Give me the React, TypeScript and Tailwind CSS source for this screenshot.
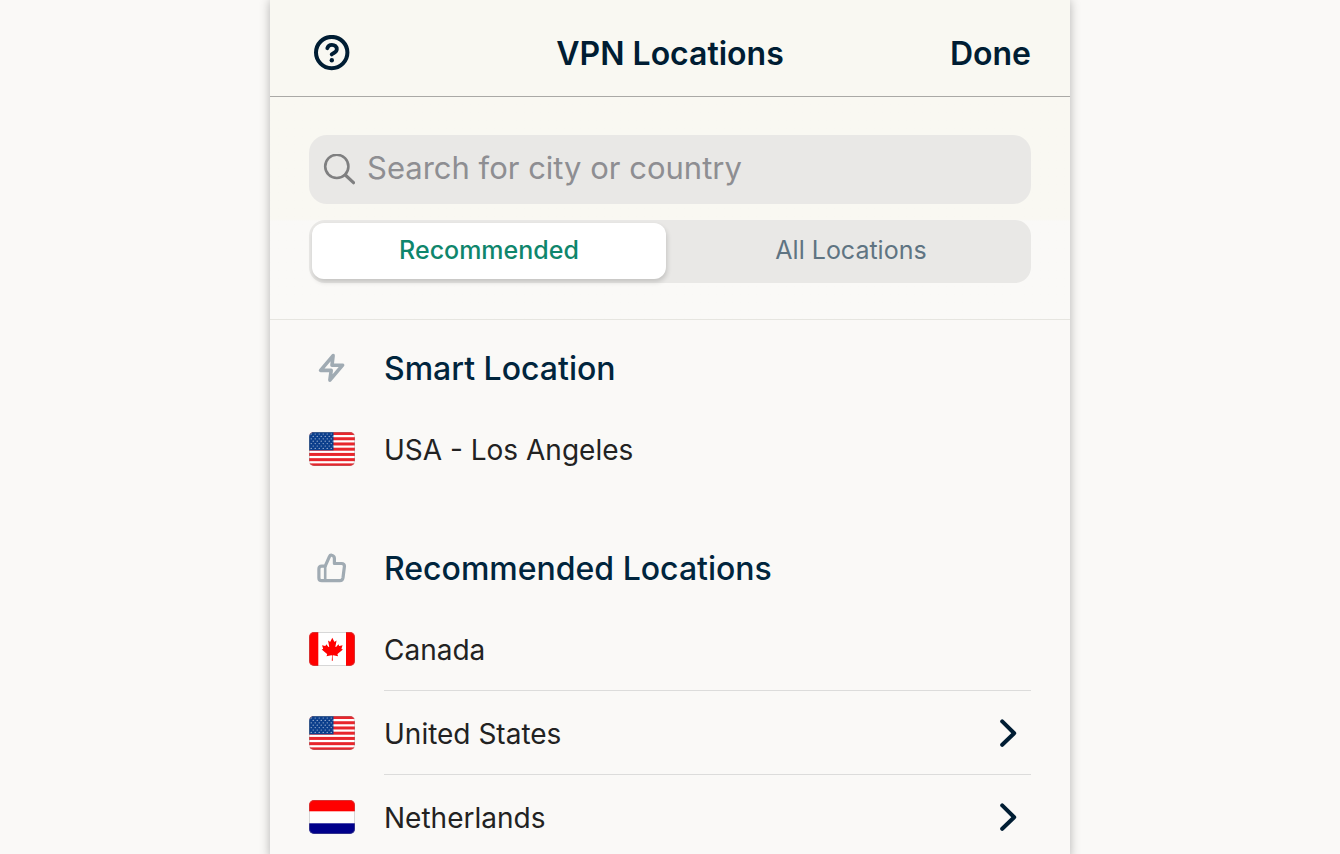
import React, { useState } from "react";

type Country = "us" | "ca" | "nl";

const STRIPES = [0, 2, 4, 6, 8, 10, 12];
const STAR_ROWS = [0, 1, 2, 3, 4, 5, 6];
const STAR_COLS = [0, 1, 2, 3, 4, 5];

function FlagArt({ country }: { country: Country }) {
  if (country === "us") {
    return (
      <>
        <rect width="46" height="34" fill="#fff" />
        {STRIPES.map((n) => (
          <rect key={n} y={(n * 34) / 13} width="46" height={34 / 13 + 0.4} fill="#e8262c" />
        ))}
        <rect width="24.5" height="18.3" fill="#0c3f8c" />
        {STAR_ROWS.map((row) =>
          STAR_COLS.map((col) => (
            <circle
              key={`${row}-${col}`}
              cx={2.2 + col * 4 + (row % 2) * 2}
              cy={2 + row * 2.4}
              r="0.6"
              fill="#b9c7e0"
            />
          ))
        )}
      </>
    );
  }

  if (country === "ca") {
    return (
      <>
        <rect width="46" height="34" fill="#fff" />
        <rect width="9.3" height="34" fill="#f00" />
        <rect x="37" width="9" height="34" fill="#f00" />
        <path
          transform="translate(23.3 17.2) scale(0.0057)"
          fill="#f00"
          d="m-90 2030 45-863a95 95 0 0 0-111-98l-859 151 116-320a65 65 0 0 0-20-73l-941-762 212-99a65 65 0 0 0 34-79l-186-572 542 115a65 65 0 0 0 73-38l105-247 423 454a65 65 0 0 0 111-57l-204-1052 327 189a65 65 0 0 0 91-27l332-652 332 652a65 65 0 0 0 91 27l327-189-204 1052a65 65 0 0 0 111 57l423-454 105 247a65 65 0 0 0 73 38l542-115-186 572a65 65 0 0 0 34 79l212 99-941 762a65 65 0 0 0-20 73l116 320-859-151a95 95 0 0 0-111 98l45 863z"
        />
      </>
    );
  }

  return (
    <>
      <rect width="46" height="34" fill="#fff" />
      <rect width="46" height="11.3" fill="#f00" />
      <rect y="23.3" width="46" height="10.7" fill="#00008b" />
    </>
  );
}

function Flag({ country }: { country: Country }) {
  return (
    <span className="block h-[34px] w-[46px] shrink-0 overflow-hidden rounded-[5px]">
      <svg viewBox="0 0 46 34" className="h-full w-full" aria-hidden="true">
        <FlagArt country={country} />
        <rect x="0.5" y="0.5" width="45" height="33" rx="4.5" fill="none" stroke="#8c8c8c" strokeOpacity="0.35" />
      </svg>
    </span>
  );
}

function HelpIcon() {
  return (
    <svg viewBox="0 0 36 36" className="h-9 w-9" fill="none" stroke="currentColor" aria-hidden="true">
      <circle cx="17.7" cy="17.6" r="15.7" strokeWidth="4" />
      <path d="M13.3 13.2c.6-2.3 2.4-3.4 4.6-3.4 2.8 0 4.9 1.8 4.9 4.4 0 3.3-3.3 3.4-5.1 5.2" strokeWidth="3.8" strokeLinecap="round" />
      <circle cx="17.8" cy="25.2" r="2.2" fill="currentColor" stroke="none" />
    </svg>
  );
}

function SearchIcon() {
  return (
    <svg viewBox="0 0 32 32" className="h-8 w-8 shrink-0 text-[#7f7f80]" fill="none" stroke="currentColor" aria-hidden="true">
      <circle cx="13.8" cy="12.4" r="11.6" strokeWidth="2.6" />
      <path d="M22.3 21l8.2 7.7" strokeWidth="3.2" strokeLinecap="round" />
    </svg>
  );
}

function BoltIcon() {
  return (
    <svg viewBox="0 0 30 30" className="h-[30px] w-[30px]" fill="none" stroke="currentColor" strokeWidth="3.6" strokeLinecap="round" strokeLinejoin="round" aria-hidden="true">
      <path d="M16.1 2.6L3.6 17.4h10.6L12.9 27.1 25.6 12.2H15z" />
    </svg>
  );
}

function ThumbIcon() {
  return (
    <svg viewBox="0 0 30 30" className="h-[30px] w-[30px]" fill="none" stroke="currentColor" strokeWidth="3.2" strokeLinejoin="round" strokeLinecap="round" aria-hidden="true">
      <path d="M8.2 13.2l4.2-9.6c.5-1.2 1.4-1.7 2.4-1.4 1.7.4 2.6 1.6 2.6 3.3v5h7.2c1.9 0 3 1.2 2.8 3L26 24.8c-.3 2-1.3 2.9-3.2 2.9H4.8c-1.9 0-2.9-1-2.9-2.8v-8.8c0-1.9 1-2.9 2.9-2.9z" />
      <path d="M8.2 13.2v14.4" strokeWidth="2.6" />
    </svg>
  );
}

function ChevronIcon() {
  return (
    <svg viewBox="0 0 18 30" className="mr-3.5 h-[30px] w-[18px] text-[#001d33]" fill="none" stroke="currentColor" strokeWidth="4" strokeLinecap="round" strokeLinejoin="round" aria-hidden="true">
      <path d="M3.2 3.4l12 11.8-12 11.6" />
    </svg>
  );
}

function SectionTitle({ icon, title }: { icon: React.ReactNode; title: string }) {
  return (
    <div className="flex h-[78px] items-center gap-[29px]">
      <span className="flex w-[46px] shrink-0 justify-center text-[#a0abb3]">{icon}</span>
      <h2 className="pt-0.5 text-[32px] leading-10 font-medium text-[#00253d]">{title}</h2>
    </div>
  );
}

interface LocationRowProps {
  country: Country;
  name: string;
  divider?: boolean;
  expandable?: boolean;
}

function LocationRow({ country, name, divider, expandable }: LocationRowProps) {
  return (
    <li>
      <button type="button" className="flex h-[84px] w-full items-center gap-[29px] text-left">
        <Flag country={country} />
        <span
          className={`flex h-full flex-1 items-center justify-between border-b ${
            divider ? "border-[#dcdcdb]" : "border-transparent"
          }`}
        >
          <span className="pt-0.5 text-[28px] leading-9 text-[#222]">{name}</span>
          {expandable && <ChevronIcon />}
        </span>
      </button>
    </li>
  );
}

export default function App() {
  const [tab, setTab] = useState<"recommended" | "all">("recommended");
  const [query, setQuery] = useState("");

  const tabClass = (active: boolean) =>
    active
      ? "flex-1 rounded-xl bg-white font-medium text-[#0f866c] shadow-[1px_3px_5px_rgba(0,0,0,0.16)]"
      : "flex-1 rounded-xl text-[#5f7482]";

  return (
    <div className="min-h-screen bg-[#faf9f7] font-['Inter',sans-serif]">
      <main className="mx-auto min-h-screen w-full max-w-[800px] bg-[#faf9f7] shadow-[0_0_10px_rgba(0,0,0,0.28)]">
        <header className="grid h-[97px] grid-cols-[1fr_auto_1fr] items-center border-b border-[#aaa9a6] bg-[#f9f8f2] px-[39px] pt-3 text-[#001d33]">
          <button type="button" aria-label="Help" className="ml-[5px] justify-self-start pb-0.5">
            <HelpIcon />
          </button>
          <h1 className="text-[32px] leading-10 font-semibold">VPN Locations</h1>
          <button type="button" className="justify-self-end text-[32px] leading-10 font-semibold">
            Done
          </button>
        </header>

        <div className="border-b border-[#e6e5e0] bg-linear-to-b from-[#f9f8f2] from-55% to-[#faf9f7] to-56% px-[39px] pt-[38px] pb-9">
          <label className="flex h-[69px] items-center gap-3 rounded-[18px] bg-[#e9e8e6] px-3.5">
            <SearchIcon />
            <input
              type="text"
              aria-label="Search for city or country"
              placeholder="Search for city or country"
              value={query}
              onChange={(e) => setQuery(e.target.value)}
              className="h-full min-w-0 flex-1 bg-transparent pb-1 text-[31px] text-[#222] outline-none placeholder:text-[#8e8e92]"
            />
          </label>

          <div className="mt-4 flex h-[63px] gap-2 rounded-2xl bg-[#e9e8e6] p-[3px] pb-1 text-[25px]">
            <button type="button" className={tabClass(tab === "recommended")} onClick={() => setTab("recommended")}>
              Recommended
            </button>
            <button type="button" className={tabClass(tab === "all")} onClick={() => setTab("all")}>
              All Locations
            </button>
          </div>
        </div>

        <div className="px-[39px] pt-[9px]">
          <section className="mb-[38px]">
            <SectionTitle icon={<BoltIcon />} title="Smart Location" />
            <ul>
              <LocationRow country="us" name="USA - Los Angeles" />
            </ul>
          </section>

          <section>
            <SectionTitle icon={<ThumbIcon />} title="Recommended Locations" />
            <ul>
              <LocationRow country="ca" name="Canada" divider />
              <LocationRow country="us" name="United States" divider expandable />
              <LocationRow country="nl" name="Netherlands" divider expandable />
            </ul>
          </section>
        </div>
      </main>
    </div>
  );
}
